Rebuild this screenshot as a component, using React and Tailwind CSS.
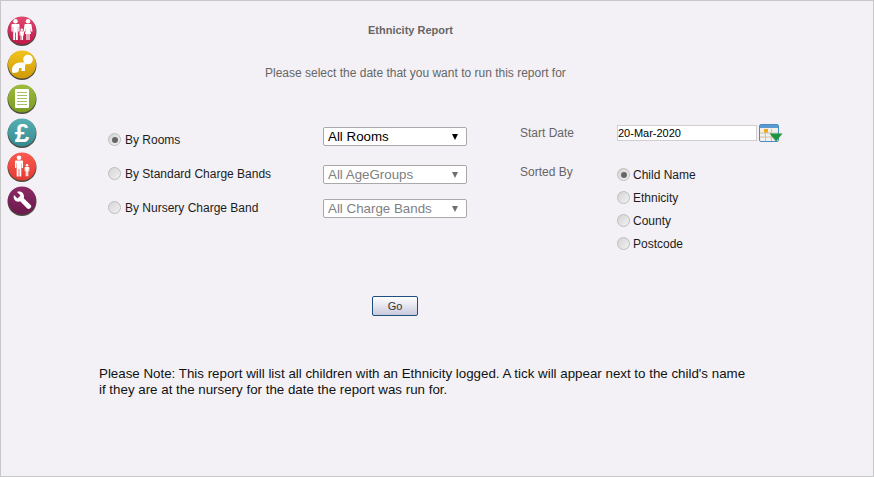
const Disc = ({ from, to, children }) => (
  <svg width="30" height="30" viewBox="0 0 30 30" className="block">
    <defs>
      <linearGradient id={from.slice(1)} x1="0" y1="0" x2="0" y2="1">
        <stop offset="0" stopColor={from} />
        <stop offset="1" stopColor={to} />
      </linearGradient>
    </defs>
    <circle cx="15" cy="15.500" r="14.500" fill="#4a4a40" />
    <circle cx="15" cy="14.500" r="14" fill={`url(#${from.slice(1)})`} />
    {children}
  </svg>
);

const Person = ({ x, y, s = 1 }) => (
  <g transform={`translate(${x} ${y}) scale(${s})`} fill="#fff">
    <circle cx="0" cy="2.200" r="2.300" />
    <path d="M-3 5h6c.6 0 1 .4 1 1v6.500h-1.300V8h-.4v13H.4v-7.500h-.8V21h-1.900V8h-.4v4.500H-4V6c0-.6.4-1 1-1z" />
  </g>
);

const NavIcons = () => (
  <div className="w-[43px] shrink-0 pt-[15px] pl-[6px] flex flex-col gap-[4px]">
    <Disc from="#e0486f" to="#c01848">
      <Person x={8.500} y={3} />
      <g fill="#fff">
        <circle cx="21" cy="5.200" r="2.300" />
        <path d="M18.500 8h5c.6 0 1 .4 1 1l1 6.500h-1.500L22.800 11l1.200 7h-1.400v6h-1.200v-6h-.8v6h-1.200v-6H18l1.200-7-1.200 4.500h-1.500L17.500 9c0-.6.4-1 1-1z" />
      </g>
      <Person x={14.800} y={12.500} s={0.55} />
    </Disc>
    <Disc from="#f2c41e" to="#d09a08">
      <circle cx="21" cy="9.500" r="4.800" fill="#fff" />
      <path d="M5 20c0-5 4-7.500 9-7.500h3c2 .5 2 2.500 1 3.500v5h-3.500v-3H12c0 2 0 4-2 4.500l-3.500.5C5 23 5 21 5 20z" fill="#fff" />
    </Disc>
    <Disc from="#9cbc3c" to="#7b9a22">
      <rect x="8" y="5" width="14" height="19" rx="1" fill="#fff" />
      <path d="M10 8.500h10M10 11.500h10M10 14.500h10M10 17.500h10M10 20.500h10" stroke="#a4c060" strokeWidth="1.200" />
    </Disc>
    <Disc from="#56b0b2" to="#35898f">
      <text x="15" y="23.500" textAnchor="middle" fill="#fff" fontSize="26" fontWeight="700" fontFamily="'Liberation Sans', Arial, sans-serif">£</text>
    </Disc>
    <Disc from="#fb5a50" to="#e23a32">
      <Person x={12} y={3.500} />
      <Person x={20} y={12} s={0.58} />
    </Disc>
    <Disc from="#8c2a66" to="#6c1a4c">
      <path d="M7 9l3.500 3.500 3-3L10 6c3-1.500 7 .5 7 4.500 0 .8-.1 1.300-.3 1.800l7 6.700c1 1 .5 2.500-.5 3.300-1 .9-2.300 1-3.200 0l-6.800-7c-3.700 1.500-7.800-1.500-6.200-6.300z" fill="#fff" />
    </Disc>
  </div>
);

const Radio = ({ checked }) => (
  <span className="w-[13px] h-[13px] rounded-full border border-[#bdbdbd] bg-gradient-to-br from-[#d4d4d4] to-[#f2f2f2] flex items-center justify-center shrink-0">
    {checked && <span className="w-[6px] h-[6px] rounded-full bg-[#666666]" />}
  </span>
);

const Select = ({ label, disabled }) => (
  <div className={`w-[144px] h-[19px] bg-white border border-[#a9a9a9] rounded-[2px] pl-[4px] pr-[8px] flex items-center justify-between text-[13.330px] ${disabled ? 'text-[#808080]' : 'text-black'}`}>
    <span>{label}</span>
    <span className={`w-0 h-0 border-l-[3.500px] border-r-[3.500px] border-t-[6px] border-l-transparent border-r-transparent ${disabled ? 'border-t-[#707070]' : 'border-t-black'}`} />
  </div>
);

const CalendarIcon = () => (
  <svg width="24" height="19" viewBox="0 0 24 19" className="block">
    <rect x="0.500" y="0.500" width="19" height="17" rx="1.500" fill="#f2f0e8" stroke="#4a8cc4" />
    <rect x="1" y="1" width="18" height="3" fill="#5a9ad0" />
    <path d="M1 9h18M1 13h18M6.500 5v12M12.500 5v12" stroke="#c8c0b0" />
    <rect x="5" y="5" width="4" height="3.500" fill="#f0a820" />
    <path d="M10.500 9.500h13l-6.500 8z" fill="#1f9440" />
  </svg>
);

const byOptions = [
  { label: 'By Rooms', select: 'All Rooms', checked: true },
  { label: 'By Standard Charge Bands', select: 'All AgeGroups' },
  { label: 'By Nursery Charge Band', select: 'All Charge Bands' },
];

const sortOptions = ['Child Name', 'Ethnicity', 'County', 'Postcode'];

export default function App() {
  return (
    <div className="w-[874px] h-[477px] flex bg-[#f3f1f5] border border-[#c8c8c8] text-[12px] text-[#1c1c1c] font-['Liberation_Sans',Arial,sans-serif] overflow-hidden">
      <NavIcons />
      <div className="flex-1 flex flex-col">
        <h1 className="pt-[22px] pl-[324px] font-bold text-[11px] leading-[14px] text-[#666666]">Ethnicity Report</h1>
        <p className="mt-[29px] pl-[221px] leading-[14px] text-[#666666]">Please select the date that you want to run this report for</p>

        <div className="mt-[47px] flex">
          <div className="w-[476px] pl-[64px] flex flex-col">
            {byOptions.map((o, i) => (
              <div key={o.label} className={`flex items-center h-[19px] ${i === 1 ? 'mt-[19px]' : i === 2 ? 'mt-[15px]' : ''}`}>
                <div className={`w-[215px] flex items-center gap-[4px] ${i === 0 ? 'mt-[6px]' : '-mt-[2px]'}`}>
                  <Radio checked={o.checked} />
                  <span>{o.label}</span>
                </div>
                <Select label={o.select} disabled={!o.checked} />
              </div>
            ))}
          </div>
          <div className="flex flex-col">
            <div className="flex items-start -mt-[3px]">
              <span className="w-[97px] text-[#666666]">Start Date</span>
              <div className="mt-[1px] w-[140px] h-[16px] bg-white border border-[#cfcfcf] text-[11px] leading-[14px] text-black">20-Mar-2020</div>
              <span className="ml-[2px]"><CalendarIcon /></span>
            </div>
            <div className="flex items-start mt-[23px]">
              <span className="w-[97px] text-[#666666] -mt-[3px]">Sorted By</span>
              <div className="flex flex-col gap-[10px] mt-[2px]">
                {sortOptions.map((s, i) => (
                  <div key={s} className="flex items-center gap-[3px] h-[13px]">
                    <Radio checked={i === 0} />
                    <span>{s}</span>
                  </div>
                ))}
              </div>
            </div>
          </div>
        </div>

        <button className="mt-[46px] ml-[328px] w-[46px] h-[20px] rounded-[2px] border border-[#1f4f80] bg-gradient-to-b from-white to-[#c9c9dd] text-[11px] text-[#333333]">Go</button>

        <p className="mt-[50px] ml-[55px] w-[655px] text-[13.330px] leading-[16px] text-[#111111]">
          Please Note: This report will list all children with an Ethnicity logged. A tick will appear next to the child's name if they are at the nursery for the date the report was run for.
        </p>
      </div>
    </div>
  );
}
